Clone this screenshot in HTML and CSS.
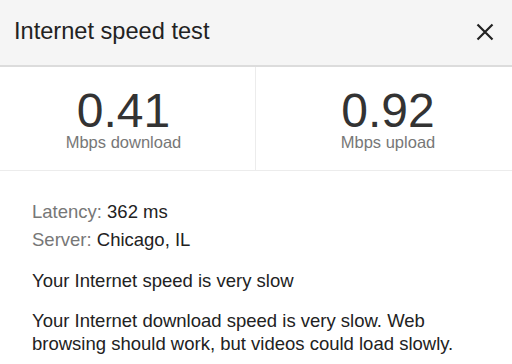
FILE: index.html
```html
<!DOCTYPE html>
<html>
<head>
<meta charset="utf-8">
<link rel="stylesheet" href="styles.css">
</head>
<body>
<div class="card">
  <div class="header">
    <div class="title">Internet speed test</div>
    <svg class="close" width="18" height="18" viewBox="0 0 18 18"><path d="M1.5 1.5L16.5 16.5M16.5 1.5L1.5 16.5" stroke="#222" stroke-width="2.2" fill="none"/></svg>
  </div>
  <div class="stats">
    <div class="stat left">
      <div class="num">0.41</div>
      <div class="unit">Mbps download</div>
    </div>
    <div class="stat right">
      <div class="num">0.92</div>
      <div class="unit">Mbps upload</div>
    </div>
  </div>
  <div class="details">
    <div class="meta"><span class="label">Latency:</span> 362 ms</div>
    <div class="meta"><span class="label">Server:</span> Chicago, IL</div>
    <p class="verdict">Your Internet speed is very slow</p>
    <p class="desc">Your Internet download speed is very slow. Web browsing should work, but videos could load slowly.</p>
  </div>
</div>
</body>
</html>
```
FILE: styles.css
```css
html, body { margin: 0; padding: 0; background: #fff; }
body { font-family: "Liberation Sans", Arial, sans-serif; color: #222; }
.card { width: 512px; }
.header {
  height: 65px;
  background: #f5f5f5;
  border-bottom: 2px solid #dcdcdc;
  display: flex;
  align-items: center;
  justify-content: space-between;
  padding: 0 18px 0 14px;
  box-sizing: content-box;
}
.title { font-size: 23.6px; color: #222; margin-top: -2px; }
.close { margin-top: -2px; }
.stats {
  display: grid;
  grid-template-columns: 1fr 1fr;
  border-bottom: 1px solid #ececec;
}
.stat {
  display: flex;
  flex-direction: column;
  align-items: center;
  padding: 19.5px 0 21.5px;
}
.stat.left { border-right: 1px solid #ececec; padding-right: 8px; }
.stat.right { padding-left: 8px; }
.num { font-size: 48px; line-height: 48px; color: #333; }
.unit { font-size: 16.5px; line-height: 14px; color: #777; }
.details { padding: 27px 32px 0 32px; font-size: 18.5px; }
.meta { line-height: 27.7px; color: #222; }
.label { color: #777; }
.verdict { margin: 16.5px 0 0; line-height: 22.5px; }
.desc { margin: 18px 0 0; line-height: 22.5px; }
```
